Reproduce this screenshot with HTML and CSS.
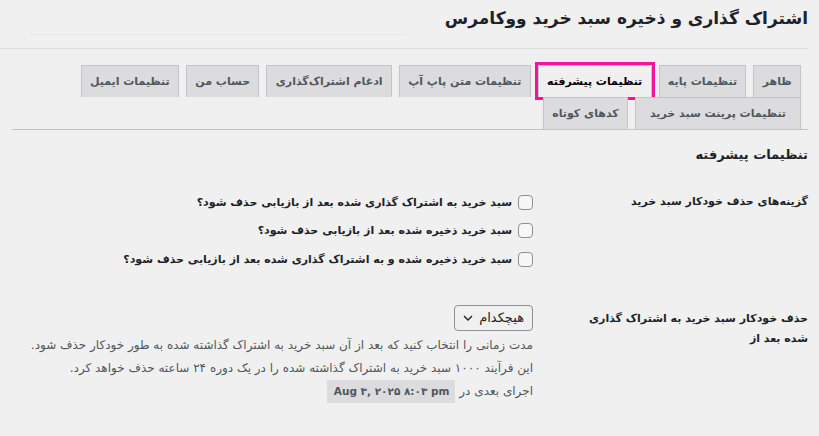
FILE: index.html
```html
<!DOCTYPE html>
<html lang="fa" dir="rtl">
<head>
<meta charset="utf-8">
<title>اشتراک گذاری و ذخیره سبد خرید ووکامرس</title>
<link rel="stylesheet" href="styles.css">
</head>
<body>
<div class="wrap">
  <div class="header">
    <h1 class="page-title">اشتراک گذاری و ذخیره سبد خرید ووکامرس</h1>
    <div class="faint-line"></div>
  </div>
  <div class="header-end"></div>

  <nav class="tabs">
    <div class="tab-row">
      <a class="tab">ظاهر</a>
      <a class="tab">تنظیمات پایه</a>
      <a class="tab tab-active">تنظیمات پیشرفته</a>
      <a class="tab">تنظیمات متن پاپ آپ</a>
      <a class="tab">ادغام اشتراک‌گذاری</a>
      <a class="tab">حساب من</a>
      <a class="tab">تنظیمات ایمیل</a>
    </div>
    <div class="tab-row">
      <a class="tab tab-wide">تنظیمات پرینت سبد خرید</a>
      <a class="tab">کدهای کوتاه</a>
    </div>
  </nav>

  <h2 class="section-title">تنظیمات پیشرفته</h2>

  <div class="form-table">
    <div class="form-row form-row-first">
      <div class="form-label">گزینه‌های حذف خودکار سبد خرید</div>
      <div class="form-field">
        <label class="check"><span class="box"></span><span>سبد خرید به اشتراک گذاری شده بعد از بازیابی حذف شود؟</span></label>
        <label class="check"><span class="box"></span><span>سبد خرید ذخیره شده بعد از بازیابی حذف شود؟</span></label>
        <label class="check"><span class="box"></span><span>سبد خرید ذخیره شده و به اشتراک گذاری شده بعد از بازیابی حذف شود؟</span></label>
      </div>
    </div>
    <div class="form-row form-row-second">
      <div class="form-label">حذف خودکار سبد خرید به اشتراک گذاری شده بعد از</div>
      <div class="form-field">
        <div class="select">
          <span>هیچکدام</span>
          <svg class="chev" width="10" height="6" viewBox="0 0 10 6"><path d="M1 1l4 4 4-4" fill="none" stroke="#1d2327" stroke-width="1.4"/></svg>
        </div>
        <div class="desc-block">
          <p class="desc">مدت زمانی را انتخاب کنید که بعد از آن سبد خرید به اشتراک گذاشته شده به طور خودکار حذف شود.</p>
          <p class="desc">این فرآیند ۱۰۰۰ سبد خرید به اشتراک گذاشته شده را در یک دوره ۲۴ ساعته حذف خواهد کرد.</p>
          <p class="desc">اجرای بعدی در <code class="code" dir="ltr">Aug ۳, ۲۰۲۵ ۸:۰۳ pm</code></p>
        </div>
      </div>
    </div>
  </div>
</div>
</body>
</html>
```

FILE: styles.css
```css
* { box-sizing: border-box; }

body {
  margin: 0;
  background: #f0f0f1;
  color: #1d2327;
  font-family: "DejaVu Sans", "Noto Sans", sans-serif;
  direction: rtl;
}

.wrap {
  padding: 0 11px 0 0;
}

.header {
  display: flex;
  align-items: flex-end;
  justify-content: space-between;
  height: 35px;
}

.page-title {
  margin: 0;
  padding-top: 4px;
  align-self: flex-start;
  font-size: 17px;
  line-height: 28px;
  font-weight: 700;
  color: #1d2327;
  white-space: nowrap;
}

.faint-line {
  width: 377px;
  height: 1px;
  margin-left: 30px;
  background: #e9e9e4;
}

.header-end {
  height: 1px;
  margin-top: 13px;
  background: #dcdcde;
}

.tabs {
  margin: 16px 0 0 12px;
  border-bottom: 1px solid #c3c4c7;
}

.tab-row {
  display: flex;
}

.tab {
  display: flex;
  align-items: center;
  justify-content: center;
  min-width: 46px;
  height: 32px;
  margin-right: 7px;
  padding: 0 8.3px;
  border: 1px solid #c3c4c7;
  border-bottom: none;
  background: #dcdcde;
  color: #50575e;
  font-size: 11px;
  font-weight: 700;
  white-space: nowrap;
}

.tab-wide {
  padding: 0 14px;
}

.tab-active {
  background: #f0f0f1;
  color: #000;
  outline: 3px solid #f5139b;
}

.section-title {
  margin: 14px 0 0 0;
  font-size: 13px;
  line-height: 22px;
  font-weight: 700;
}

.form-row {
  display: flex;
}

.form-row-first {
  margin-top: 22px;
}

.form-row-second {
  margin-top: 31px;
}

.form-label {
  width: 275px;
  flex: none;
  padding-left: 48px;
  padding-top: 4px;
  font-size: 11px;
  font-weight: 700;
  line-height: 20px;
}

.form-field {
  flex: 1;
}

.check {
  display: flex;
  align-items: center;
  height: 28.5px;
  font-size: 11px;
  font-weight: 700;
  color: #1d2327;
}

.box {
  width: 15px;
  height: 15px;
  margin-left: 6px;
  border: 1px solid #8c8f94;
  border-radius: 4px;
  background: #f6f7f7;
  flex: none;
}

.select {
  display: inline-flex;
  align-items: center;
  gap: 6px;
  height: 26px;
  padding: 0 8px;
  border: 1px solid #8c8f94;
  border-radius: 4px;
  font-size: 13px;
  color: #1d2327;
}

.chev {
  display: block;
}

.desc-block {
  margin-top: 3px;
}

.desc {
  margin: 0;
  font-size: 12px;
  line-height: 23px;
  color: #50575e;
}

.code {
  display: inline-block;
  padding: 0 6px 0 7px;
  background: #dcdcde;
  font-family: "DejaVu Sans", sans-serif;
  font-size: 10.5px;
  font-weight: 700;
  line-height: 23px;
  color: #50575e;
}
```
